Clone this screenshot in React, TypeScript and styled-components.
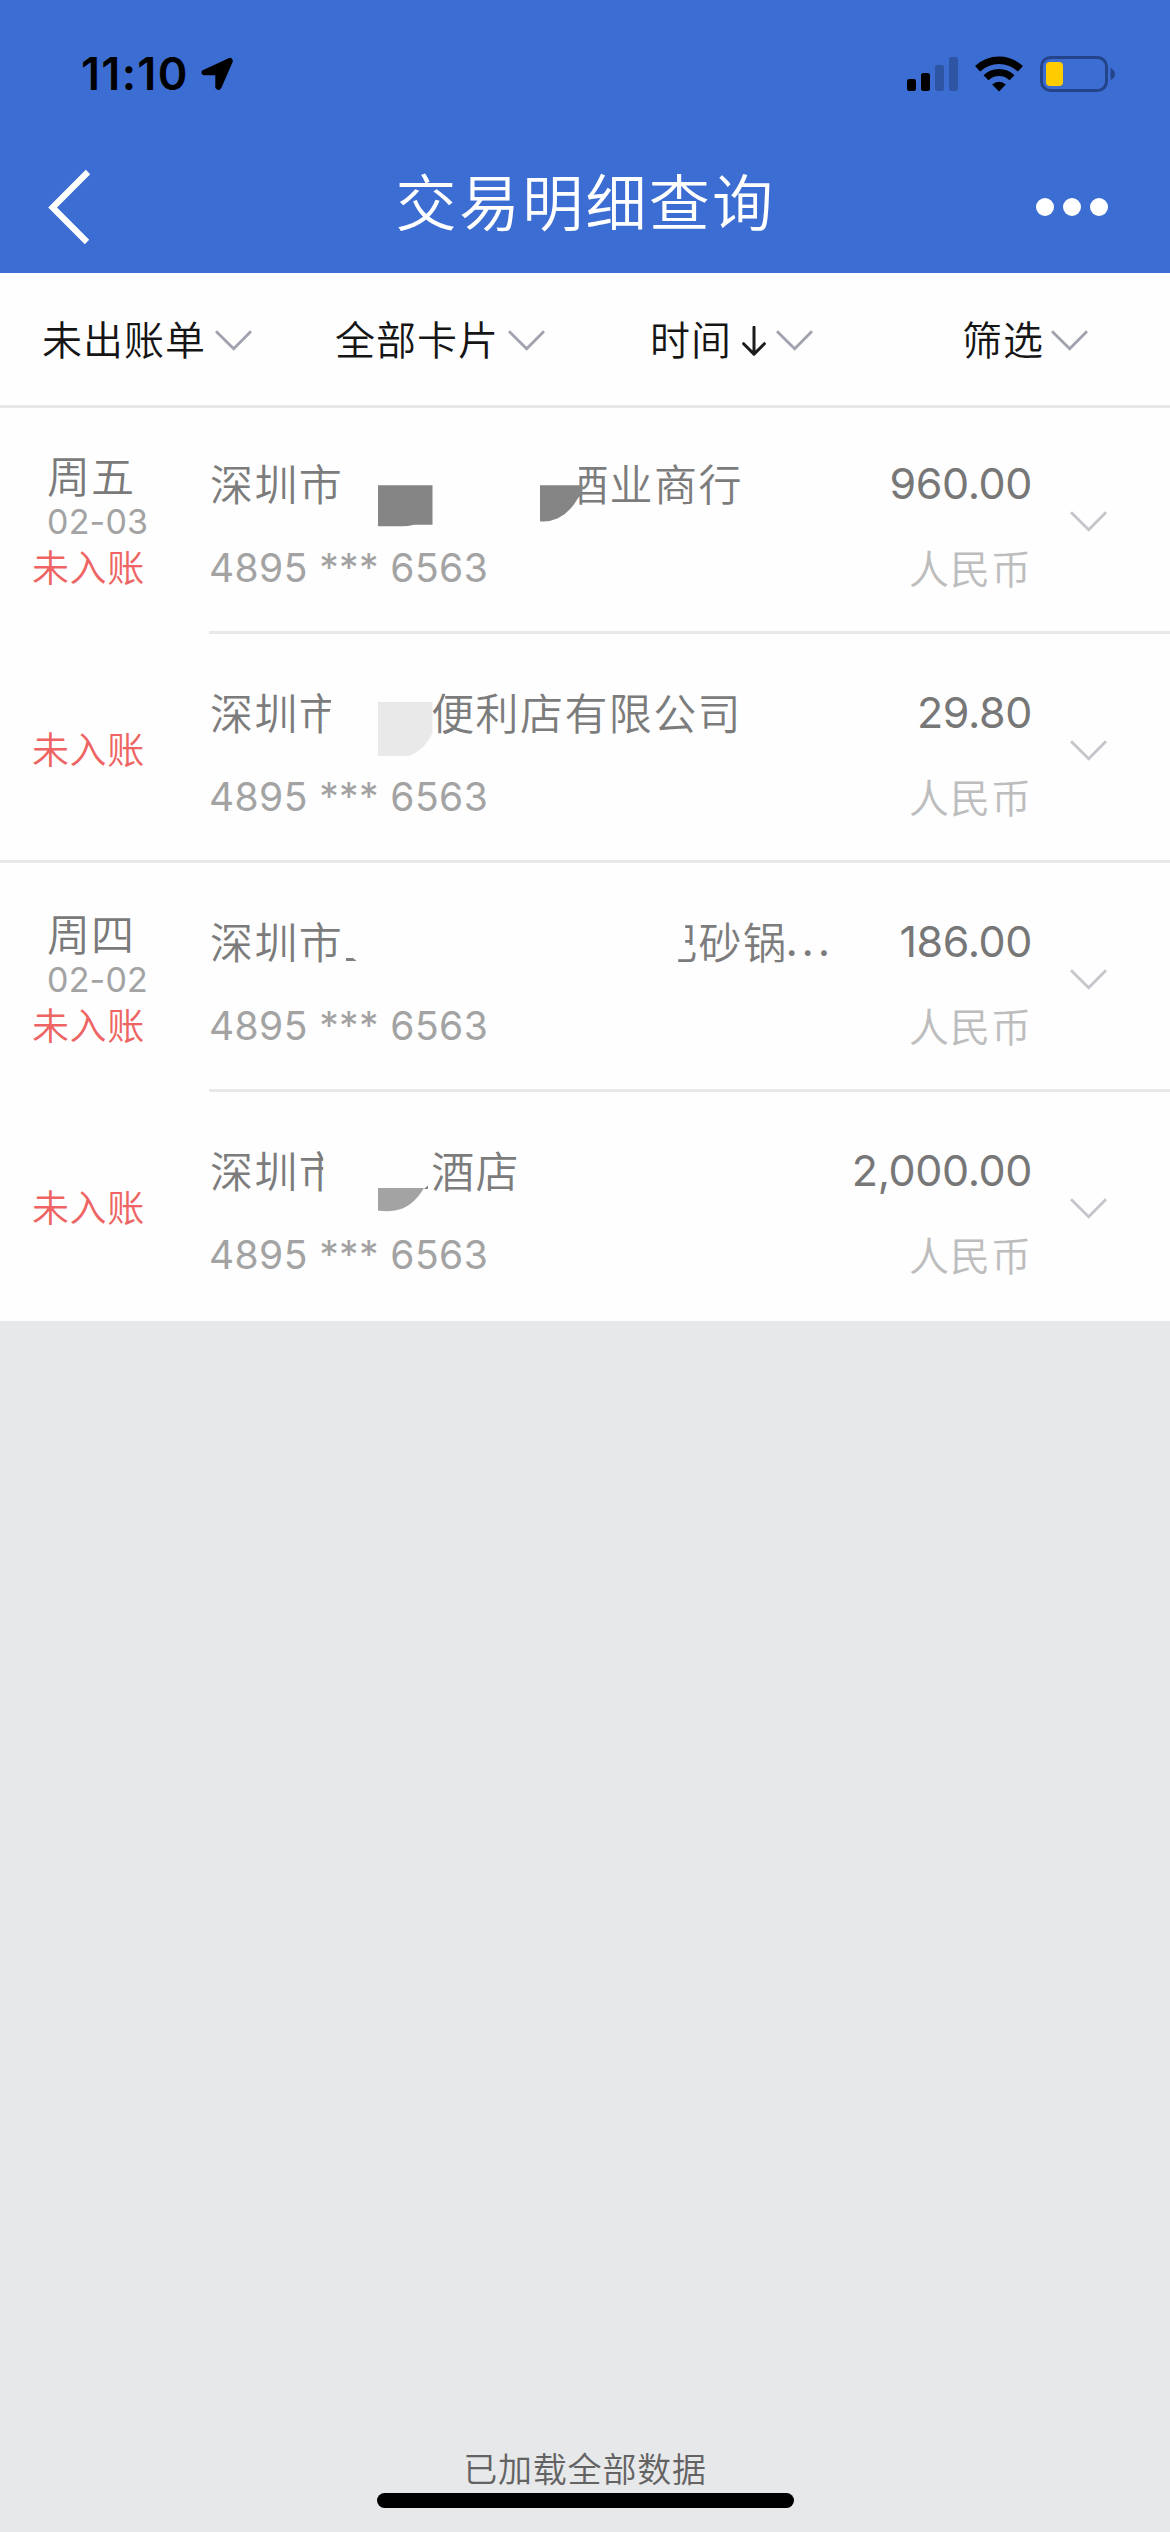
import React from "react";
import styled, { createGlobalStyle } from "styled-components";

const CJK = `"Noto Sans CJK SC", "Noto Sans", sans-serif`;
const LATIN = `Inter, "Noto Sans CJK SC", sans-serif`;

const GlobalStyle = createGlobalStyle`
  * { box-sizing: border-box; }
  html, body { margin: 0; padding: 0; }
  body { background: #e7e8ea; font-family: ${CJK}; font-weight: 350; }
`;

const Screen = styled.div`
  width: 1170px;
  height: 2532px;
  display: flex;
  flex-direction: column;
  background: #e7e8ea;
  overflow: hidden;
`;

const Header = styled.header`
  height: 273px;
  background: #3c6dd2;
  display: flex;
  flex-direction: column;
`;

const StatusBar = styled.div`
  height: 148px;
  padding: 0 55px 0 81px;
  display: flex;
  align-items: center;
  justify-content: space-between;
`;

const StatusGroup = styled.div<{ $gap: number }>`
  display: flex;
  align-items: center;
  gap: ${(p) => p.$gap}px;
`;

const Clock = styled.span`
  font-family: ${LATIN};
  font-weight: 600;
  font-size: 45px;
  line-height: 60px;
  width: 108px;
  letter-spacing: 1.3px;
  white-space: nowrap;
`;

const NavBar = styled.div`
  height: 125px;
  padding: 0 62px 7px 48px;
  display: grid;
  grid-template-columns: 80px 1fr 72px;
  align-items: center;
`;

const Title = styled.h1`
  margin: 0;
  padding: 0 0 14px 7px;
  font-size: 61px;
  line-height: 80px;
  font-weight: 350;
  letter-spacing: 2.3px;
  color: #fff;
  text-align: center;
`;

const Dots = styled.div`
  display: flex;
  gap: 9px;
  justify-content: flex-end;
`;

const Dot = styled.i`
  width: 18px;
  height: 18px;
  border-radius: 50%;
  background: #fff;
`;

const FilterBar = styled.nav`
  height: 135px;
  flex: none;
  padding: 0 0 1px 42px;
  display: flex;
  align-items: center;
  background: #fefefe;
  border-bottom: 3px solid #e8e8ea;
  z-index: 1;
`;

const Filter = styled.div<{ $width: number; $gap: number }>`
  width: ${(p) => p.$width}px;
  display: flex;
  align-items: center;
  gap: ${(p) => p.$gap}px;

  svg {
    margin-top: 4px;
  }
`;

const FilterLabel = styled.span`
  font-size: 40px;
  line-height: 58px;
  letter-spacing: 1px;
  color: #151515;
  white-space: nowrap;
  padding-bottom: 2px;
`;

const List = styled.main`
  margin-top: -3px;
  background: #fefefe;
  display: flex;
  flex-direction: column;
`;

const Row = styled.section`
  height: 229px;
  display: grid;
  grid-template-columns: 209px minmax(0, 1fr);
`;

const DayCell = styled.div<{ $line: boolean }>`
  display: flex;
  flex-direction: column;
  justify-content: center;
  padding-top: 1px;
  border-bottom: ${(p) => (p.$line ? "3px solid #e8e8ea" : "3px solid transparent")};
`;

const Weekday = styled.span`
  padding-left: 47px;
  font-size: 43px;
  line-height: 50px;
  letter-spacing: 1px;
  color: #7a7a7a;
`;

const DateText = styled.span`
  padding: 2px 0 0 47px;
  font-family: ${LATIN};
  font-weight: 400;
  font-size: 34px;
  line-height: 42px;
  letter-spacing: 0.2px;
  color: #a3a3a3;
`;

const Status = styled.span`
  padding-left: 32px;
  font-size: 37px;
  line-height: 46px;
  letter-spacing: 0.6px;
  color: #ed6463;
`;

const Detail = styled.div<{ $line: boolean }>`
  display: grid;
  grid-template-columns: minmax(0, 1fr) 200px 138px;
  border-bottom: ${(p) => (p.$line ? "3px solid #e8e8ea" : "3px solid transparent")};
`;

const Stack = styled.div<{ $end?: boolean }>`
  display: flex;
  flex-direction: column;
  align-items: ${(p) => (p.$end ? "flex-end" : "flex-start")};
  gap: 25px;
  padding-top: 47px;
`;

const Name = styled.div`
  position: relative;
  display: flex;
  height: 60px;
  padding-left: 1px;
  font-size: 43px;
  line-height: 60px;
  letter-spacing: 1.4px;
  color: #7c7c7c;
  white-space: nowrap;
`;

const NamePart = styled.span<{ $clip?: string }>`
  flex: none;
  clip-path: ${(p) => p.$clip ?? "none"};
`;

const Ellipsis = styled.span`
  font-family: ${LATIN};
  font-weight: 400;
  margin-left: -2px;
  letter-spacing: 3.8px;
`;

const Spacer = styled.span<{ $w: number }>`
  flex: none;
  width: ${(p) => p.$w}px;
`;

const Smudge = styled.svg`
  position: absolute;
  left: 0;
  top: 0;
`;

const CardNo = styled.div`
  padding-top: 1px;
  font-family: ${LATIN};
  font-weight: 400;
  font-size: 39px;
  line-height: 60px;
  letter-spacing: 0.4px;
  color: #a3a3a3;
  white-space: pre;
`;

const Amount = styled.div`
  padding-top: 1px;
  height: 60px;
  font-family: ${LATIN};
  font-weight: 400;
  font-size: 43px;
  line-height: 60px;
  letter-spacing: -0.4px;
  color: #777;
`;

const Currency = styled.div`
  font-size: 40px;
  line-height: 60px;
  letter-spacing: 1px;
  color: #bdbdbd;
`;

const Expand = styled.div`
  padding: 106px 0 0 38px;
`;

const Footer = styled.footer`
  margin-top: auto;
  display: flex;
  flex-direction: column;
  align-items: center;
  padding-bottom: 24px;
`;

const FooterText = styled.span`
  font-size: 34px;
  line-height: 50px;
  letter-spacing: 0.8px;
  color: #636363;
`;

const HomeIndicator = styled.div`
  width: 417px;
  height: 15px;
  border-radius: 8px;
  background: #000;
`;

const ChevronIcon = styled.svg`
  display: block;
  flex: none;
`;

const Chevron = ({ color }: { color: string }) => (
  <ChevronIcon width="37" height="21" viewBox="0 0 37 21" fill="none">
    <path d="M1 1.2 18.7 18.8 36 1.2" stroke={color} strokeWidth="2.8" />
  </ChevronIcon>
);

const LocationArrow = () => (
  <svg width="32" height="34" viewBox="0 0 32 34">
    <path
      d="M29 3 2.700 15.200Q2.500 16 3 16H16.500V30Q17.500 31.500 18.300 30L29.600 4Z"
      fill="#000"
      stroke="#000"
      strokeWidth="4.4"
      strokeLinejoin="round"
    />
  </svg>
);

const Signal = () => (
  <svg width="51" height="36" viewBox="0 0 51 36">
    <rect x="0" y="23" width="9" height="12" rx="2.2" />
    <rect x="14" y="17" width="9" height="18" rx="2.2" />
    <rect x="28" y="9" width="9" height="26" rx="2.2" fillOpacity="0.22" />
    <rect x="42" y="1" width="9" height="34" rx="2.2" fillOpacity="0.22" />
  </svg>
);

const Wifi = () => (
  <svg width="48" height="36" viewBox="0 0 48 36" fill="none" stroke="#000">
    <path d="M2.600 12.800A31 31 0 0 1 45.400 12.800" strokeWidth="7.400" />
    <path d="M11 21.800A18.600 18.600 0 0 1 37 21.800" strokeWidth="7" />
    <path d="M24 35.600 17.200 28.600A9.600 9.600 0 0 1 30.800 28.600Z" fill="#000" stroke="none" />
  </svg>
);

const Battery = () => (
  <svg width="75" height="36" viewBox="0 0 75 36">
    <rect x="1.5" y="1.5" width="65" height="33" rx="9" fill="none" stroke="#24448a" strokeWidth="3" />
    <rect x="6" y="6" width="17" height="24" rx="4" fill="#ffcc00" />
    <path d="M70.5 12q4.5 2 4.5 6t-4.5 6Z" fill="#24448a" />
  </svg>
);

const BackIcon = () => (
  <svg width="44" height="76" viewBox="0 0 44 76" fill="none">
    <path d="M40 3 4.600 38.500 39 73" stroke="#fff" strokeWidth="6.200" />
  </svg>
);

const SortArrow = () => (
  <svg width="24" height="30" viewBox="0 0 24 30" fill="none">
    <path d="M12 1.200v27M1.600 17.700 12 28.100 22.400 17.700" stroke="#1b1b1b" strokeWidth="3" strokeLinecap="round" strokeLinejoin="round" />
  </svg>
);

type Entry = {
  weekday?: string;
  date?: string;
  amount: string;
  dayEnd: boolean;
  last?: boolean;
  name: React.ReactNode;
};

const entries: Entry[] = [
  {
    weekday: "周五",
    date: "02-03",
    amount: "960.00",
    dayEnd: false,
    name: (
      <>
        <NamePart>深圳市</NamePart>
        <Spacer $w={222} />
        <NamePart $clip="inset(0 0 0 14px)">酒业商行</NamePart>
        <Smudge width="420" height="80" fill="#858585">
          <path d="M169 33.300h54.500v39.400H205q-8 2-14 1.500H169Z" />
          <path d="M331 33.300h43q0 8-5 13-8 14-20 20-9 4-18 3Z" />
        </Smudge>
      </>
    ),
  },
  {
    amount: "29.80",
    dayEnd: true,
    name: (
      <>
        <NamePart $clip="polygon(0 0, 121px 0, 121px 26px, 118px 36px, 114px 50px, 114px 60px, 0 60px)">深圳市</NamePart>
        <Spacer $w={88} />
        <NamePart>便利店有限公司</NamePart>
        <Smudge width="420" height="80" fill="#e9e9e9">
          <path d="M169 21h54.500v31q-9 18-24 23H169Z" />
        </Smudge>
      </>
    ),
  },
  {
    weekday: "周四",
    date: "02-02",
    amount: "186.00",
    dayEnd: false,
    name: (
      <>
        <NamePart>深圳市</NamePart>
        <Spacer $w={311} />
        <NamePart $clip="polygon(31px 0, 100% 0, 100% 100%, 24px 100%, 24px 40px, 31px 34px)">记砂锅</NamePart>
        <Ellipsis>...</Ellipsis>
        <Smudge width="420" height="80" fill="#808080">
          <path d="M137 48h7l3.500 3H137Z" />
        </Smudge>
      </>
    ),
  },
  {
    amount: "2,000.00",
    dayEnd: true,
    last: true,
    name: (
      <>
        <NamePart $clip="inset(0 20px 0 0)">深圳市</NamePart>
        <Spacer $w={88} />
        <NamePart>酒店</NamePart>
        <Smudge width="420" height="80" fill="#a3a3a3">
          <path d="M169 49h46q-12 20-29 22.500-9 1.500-17 0Z" />
          <path d="M215 50l4-3.500V50Z" fill="#808080" />
        </Smudge>
      </>
    ),
  },
];

export default function App() {
  return (
    <>
      <GlobalStyle />
      <Screen>
        <Header>
          <StatusBar>
            <StatusGroup $gap={12}>
              <Clock>11:10</Clock>
              <LocationArrow />
            </StatusGroup>
            <StatusGroup $gap={17}>
              <Signal />
              <Wifi />
              <Battery />
            </StatusGroup>
          </StatusBar>
          <NavBar>
            <BackIcon />
            <Title>交易明细查询</Title>
            <Dots>
              <Dot />
              <Dot />
              <Dot />
            </Dots>
          </NavBar>
        </Header>
        <FilterBar>
          <Filter $width={293} $gap={9}>
            <FilterLabel>未出账单</FilterLabel>
            <Chevron color="#a0a2ad" />
          </Filter>
          <Filter $width={315} $gap={9}>
            <FilterLabel>全部卡片</FilterLabel>
            <Chevron color="#a0a2ad" />
          </Filter>
          <Filter $width={312} $gap={10}>
            <FilterLabel>时间</FilterLabel>
            <SortArrow />
            <Chevron color="#a0a2ad" />
          </Filter>
          <Filter $width={140} $gap={7}>
            <FilterLabel>筛选</FilterLabel>
            <Chevron color="#a0a2ad" />
          </Filter>
        </FilterBar>
        <List>
          {entries.map((e, i) => (
            <Row key={i}>
              <DayCell $line={e.dayEnd && !e.last}>
                {e.weekday && <Weekday>{e.weekday}</Weekday>}
                {e.date && <DateText>{e.date}</DateText>}
                <Status>未入账</Status>
              </DayCell>
              <Detail $line={!e.last}>
                <Stack>
                  <Name>{e.name}</Name>
                  <CardNo>4895 *** 6563</CardNo>
                </Stack>
                <Stack $end>
                  <Amount>{e.amount}</Amount>
                  <Currency>人民币</Currency>
                </Stack>
                <Expand>
                  <Chevron color="#c5c6cc" />
                </Expand>
              </Detail>
            </Row>
          ))}
        </List>
        <Footer>
          <FooterText>已加载全部数据</FooterText>
          <HomeIndicator />
        </Footer>
      </Screen>
    </>
  );
}
